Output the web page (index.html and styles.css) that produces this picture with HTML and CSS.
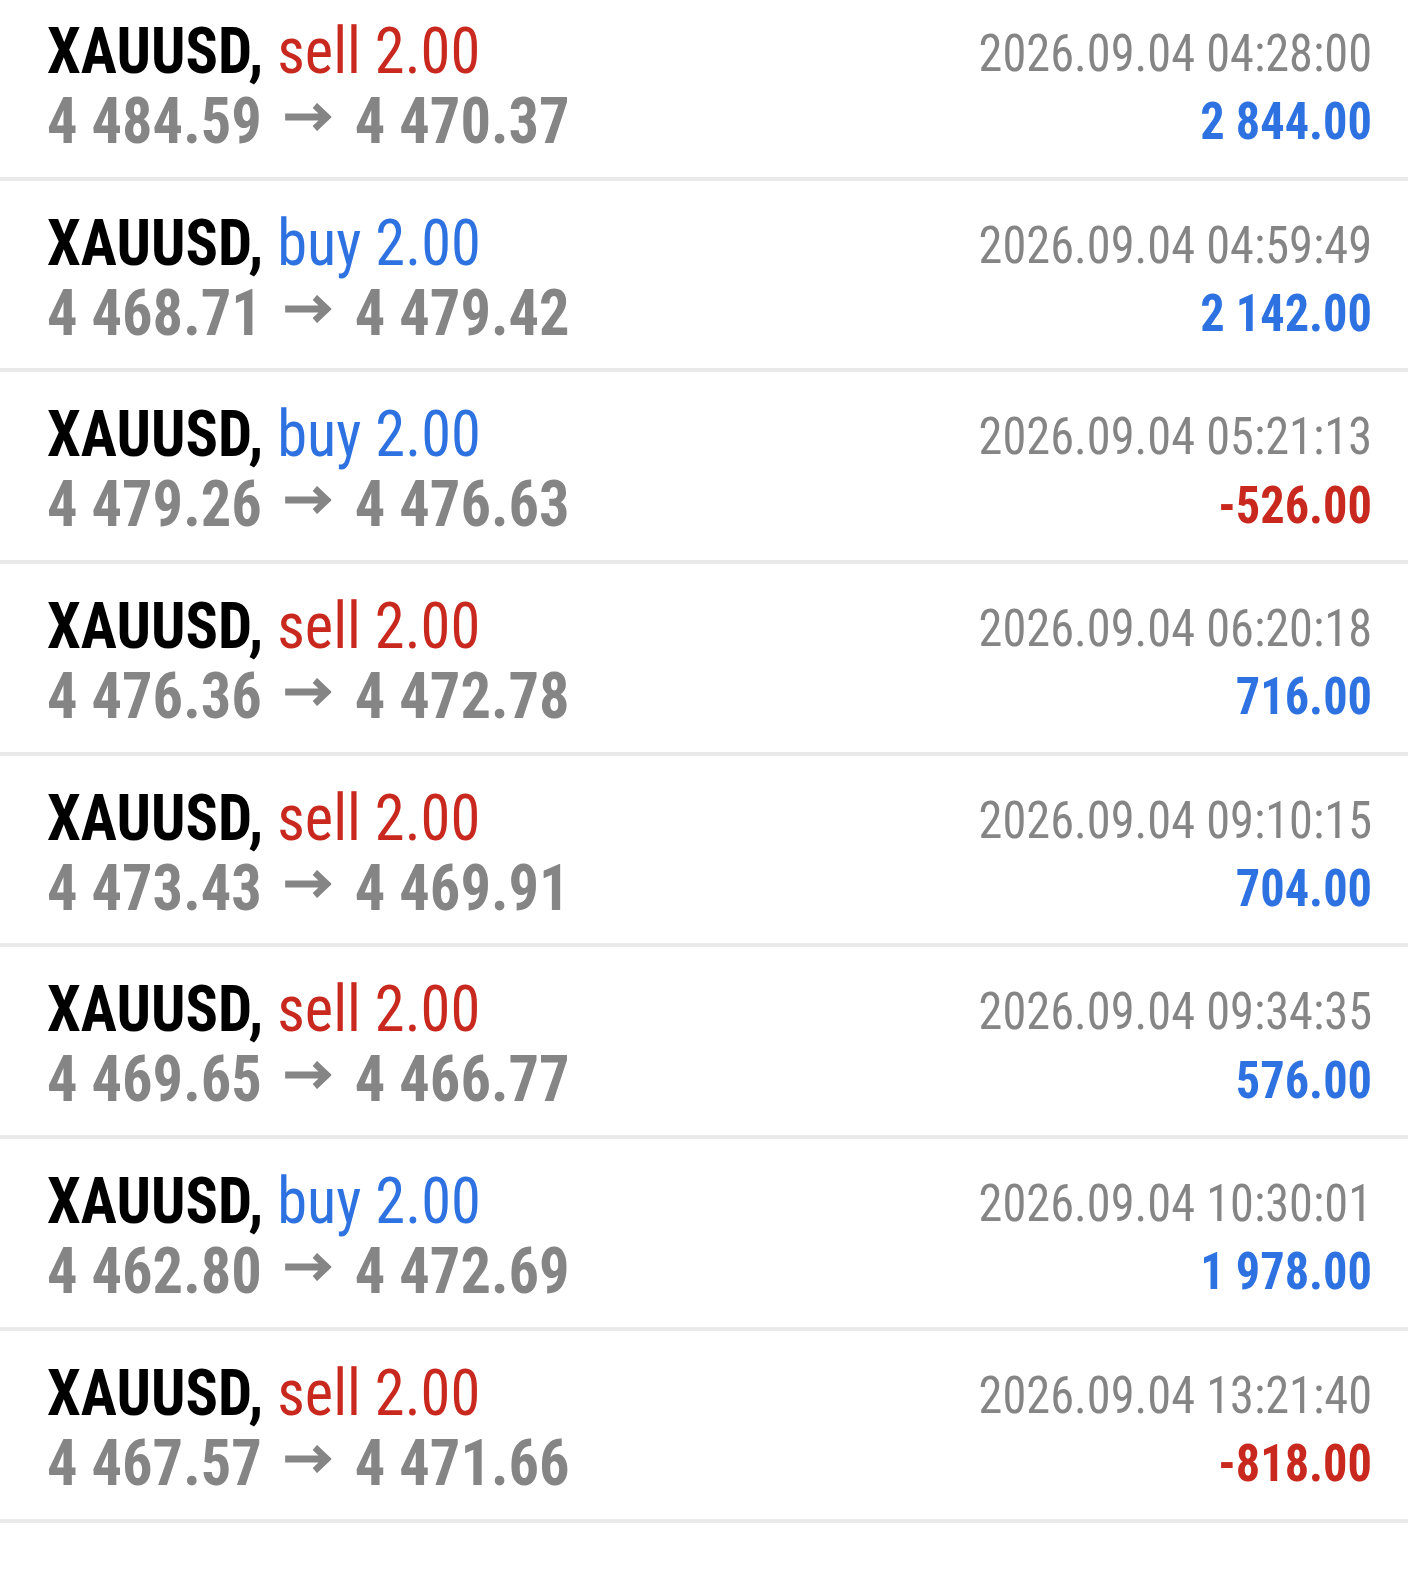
FILE: index.html
```html
<!DOCTYPE html>
<html lang="en">
<head>
  <meta charset="UTF-8" />
  <meta name="viewport" content="width=device-width, initial-scale=1.0" />
  <title>History</title>
  <link rel="stylesheet" href="styles.css">
</head>
<body>
  <!-- Closed deals -->
  <ul class="deals">
    <li class="deal">
      <div class="deal-main">
        <div class="deal-title"><span class="symbol">XAUUSD,</span> <span class="sell">sell 2.00</span></div>
        <div class="deal-prices">4 484.59<svg class="arrow" viewBox="0 0 50 28" aria-label="→"><path d="M0 14H45M32 2.5L45 14L32 25.5"/></svg>4 470.37</div>
      </div>
      <div class="deal-info">
        <div class="deal-time">2026.09.04 04:28:00</div>
        <div class="deal-profit gain">2 844.00</div>
      </div>
    </li>
    <li class="deal">
      <div class="deal-main">
        <div class="deal-title"><span class="symbol">XAUUSD,</span> <span class="buy">buy 2.00</span></div>
        <div class="deal-prices">4 468.71<svg class="arrow" viewBox="0 0 50 28" aria-label="→"><path d="M0 14H45M32 2.5L45 14L32 25.5"/></svg>4 479.42</div>
      </div>
      <div class="deal-info">
        <div class="deal-time">2026.09.04 04:59:49</div>
        <div class="deal-profit gain">2 142.00</div>
      </div>
    </li>
    <li class="deal">
      <div class="deal-main">
        <div class="deal-title"><span class="symbol">XAUUSD,</span> <span class="buy">buy 2.00</span></div>
        <div class="deal-prices">4 479.26<svg class="arrow" viewBox="0 0 50 28" aria-label="→"><path d="M0 14H45M32 2.5L45 14L32 25.5"/></svg>4 476.63</div>
      </div>
      <div class="deal-info">
        <div class="deal-time">2026.09.04 05:21:13</div>
        <div class="deal-profit loss">-526.00</div>
      </div>
    </li>
    <li class="deal">
      <div class="deal-main">
        <div class="deal-title"><span class="symbol">XAUUSD,</span> <span class="sell">sell 2.00</span></div>
        <div class="deal-prices">4 476.36<svg class="arrow" viewBox="0 0 50 28" aria-label="→"><path d="M0 14H45M32 2.5L45 14L32 25.5"/></svg>4 472.78</div>
      </div>
      <div class="deal-info">
        <div class="deal-time">2026.09.04 06:20:18</div>
        <div class="deal-profit gain">716.00</div>
      </div>
    </li>
    <li class="deal">
      <div class="deal-main">
        <div class="deal-title"><span class="symbol">XAUUSD,</span> <span class="sell">sell 2.00</span></div>
        <div class="deal-prices">4 473.43<svg class="arrow" viewBox="0 0 50 28" aria-label="→"><path d="M0 14H45M32 2.5L45 14L32 25.5"/></svg>4 469.91</div>
      </div>
      <div class="deal-info">
        <div class="deal-time">2026.09.04 09:10:15</div>
        <div class="deal-profit gain">704.00</div>
      </div>
    </li>
    <li class="deal">
      <div class="deal-main">
        <div class="deal-title"><span class="symbol">XAUUSD,</span> <span class="sell">sell 2.00</span></div>
        <div class="deal-prices">4 469.65<svg class="arrow" viewBox="0 0 50 28" aria-label="→"><path d="M0 14H45M32 2.5L45 14L32 25.5"/></svg>4 466.77</div>
      </div>
      <div class="deal-info">
        <div class="deal-time">2026.09.04 09:34:35</div>
        <div class="deal-profit gain">576.00</div>
      </div>
    </li>
    <li class="deal">
      <div class="deal-main">
        <div class="deal-title"><span class="symbol">XAUUSD,</span> <span class="buy">buy 2.00</span></div>
        <div class="deal-prices">4 462.80<svg class="arrow" viewBox="0 0 50 28" aria-label="→"><path d="M0 14H45M32 2.5L45 14L32 25.5"/></svg>4 472.69</div>
      </div>
      <div class="deal-info">
        <div class="deal-time">2026.09.04 10:30:01</div>
        <div class="deal-profit gain">1 978.00</div>
      </div>
    </li>
    <li class="deal">
      <div class="deal-main">
        <div class="deal-title"><span class="symbol">XAUUSD,</span> <span class="sell">sell 2.00</span></div>
        <div class="deal-prices">4 467.57<svg class="arrow" viewBox="0 0 50 28" aria-label="→"><path d="M0 14H45M32 2.5L45 14L32 25.5"/></svg>4 471.66</div>
      </div>
      <div class="deal-info">
        <div class="deal-time">2026.09.04 13:21:40</div>
        <div class="deal-profit loss">-818.00</div>
      </div>
    </li>
  </ul>
</body>
</html>
```

FILE: styles.css
```css
body {
  margin: 0;
  padding: 0;
  background: #fff;
  font-family: "Roboto Condensed", Roboto, "Liberation Sans", sans-serif;
  font-stretch: condensed;
}
.deals {
  list-style: none;
  margin: -11px 0 0 0;
  padding: 0;
}
.deal {
  display: flex;
  justify-content: space-between;
  height: 187.7px;
  padding: 0 36px 0 47px;
  border-bottom: 4px solid #e9e9e9;
}
/* the app font is narrower than Roboto condensed */
.deal-main {
  padding-top: 27px;
  font-size: 65px;
  line-height: 70px;
  transform: scaleX(0.93);
  transform-origin: left top;
}
.deal-title {
  white-space: nowrap;
}
.symbol {
  color: #000;
  font-weight: bold;
}
.sell {
  color: #c8281e;
}
.buy {
  color: #2e72e2;
}
.deal-prices {
  color: #858585;
  font-weight: bold;
  white-space: nowrap;
}
.arrow {
  width: 50px;
  height: 28px;
  margin: 0 25px;
  vertical-align: 12px;
  fill: none;
  stroke: #858585;
  stroke-width: 7;
}
.deal-info {
  padding-top: 31px;
  font-size: 52px;
  line-height: 68.3px;
  text-align: right;
  transform: scaleX(0.93);
  transform-origin: right top;
}
.deal-time {
  color: #858585;
  white-space: nowrap;
}
.deal-profit {
  font-weight: bold;
}
.gain {
  color: #2e72e2;
}
.loss {
  color: #c8281e;
}
```
